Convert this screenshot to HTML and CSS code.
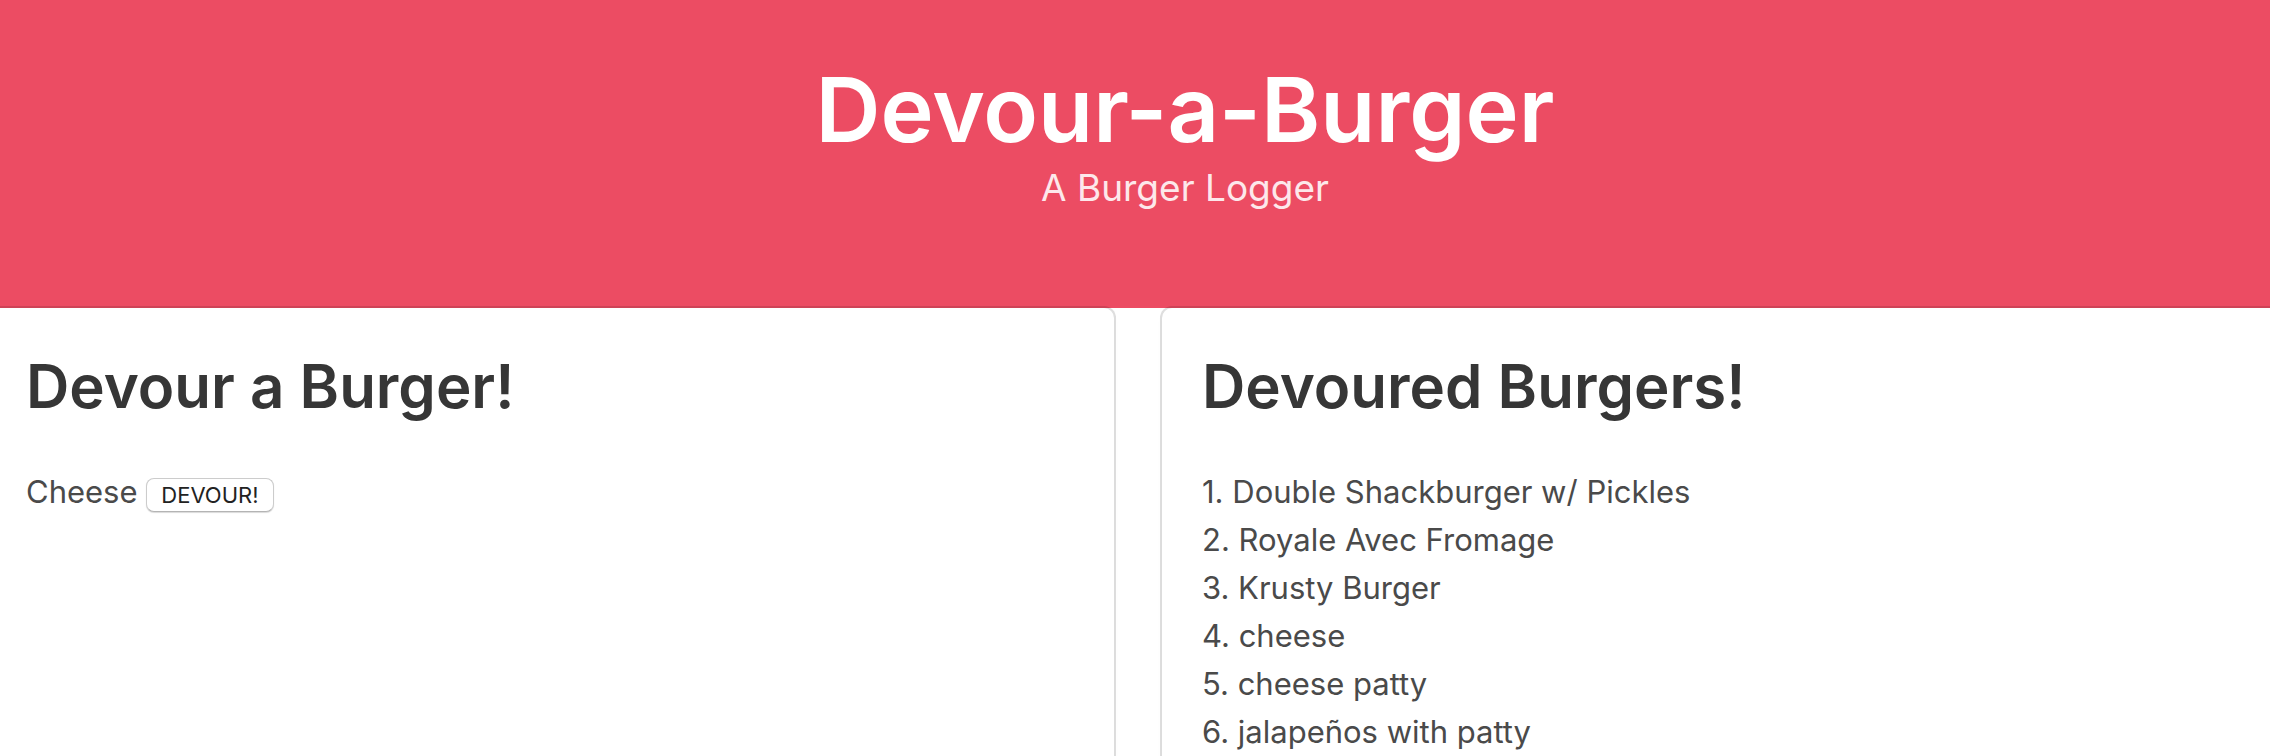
FILE: index.html
```html
<!DOCTYPE html>
<html lang="en">
<head>
<meta charset="utf-8">
<title>Devour-a-Burger</title>
<link rel="stylesheet" href="styles.css">
</head>
<body>
<header class="hero">
<h1 class="title">Devour-a-Burger</h1>
<p class="subtitle">A Burger Logger</p>
</header>
<main class="columns">
<section class="box pending">
<h2 class="heading">Devour a Burger!</h2>
<ul class="list">
<li>Cheese <button class="devour" type="button">DEVOUR!</button></li>
</ul>
</section>
<section class="box devoured">
<h2 class="heading">Devoured Burgers!</h2>
<ul class="list">
<li>1. Double Shackburger w/ Pickles</li>
<li>2. Royale Avec Fromage</li>
<li>3. Krusty Burger</li>
<li>4. cheese</li>
<li>5. cheese patty</li>
<li>6. jalapeños with patty</li>
</ul>
</section>
</main>
</body>
</html>
```
FILE: styles.css
```css
* {
  box-sizing: border-box;
  margin: 0;
  padding: 0;
}

body {
  overflow-x: hidden;
  background: #fff;
  color: #4a4a4a;
  font-family: Inter, "Liberation Sans", sans-serif;
  font-size: 31px;
  line-height: 48px;
}

body::-webkit-scrollbar {
  display: none;
}

.hero {
  padding: 56px 0 96px 100px;
  background: #ec4c63;
  color: #fff;
  text-align: center;
}

.title {
  font-size: 90px;
  font-weight: 600;
  line-height: 108px;
}

.subtitle {
  color: #fde8eb;
  font-size: 37px;
}

.columns {
  display: grid;
  grid-template-columns: 1114fr 1108fr;
  gap: 48px;
}

.box {
  padding: 40px 40px 0;
  background: #fff;
  box-shadow: 0 4px 6px rgba(10, 10, 10, 0.03), 0 0 0 2px rgba(10, 10, 10, 0.13);
}

.pending {
  padding-left: 26px;
  border-top-right-radius: 10px;
}

.devoured {
  border-top-left-radius: 10px;
}

.heading {
  margin-bottom: 44px;
  color: #363636;
  font-size: 60px;
  font-weight: 600;
  line-height: 76px;
}

.list {
  list-style: none;
}

.devour {
  padding: 0 14px;
  border: 1px solid #ccc;
  border-bottom-color: #b4b4b4;
  border-radius: 8px;
  background: #fff;
  box-shadow: 0 1px 1px rgba(0, 0, 0, 0.15);
  color: #222;
  font-family: inherit;
  font-size: 22px;
  line-height: 32px;
}
```
